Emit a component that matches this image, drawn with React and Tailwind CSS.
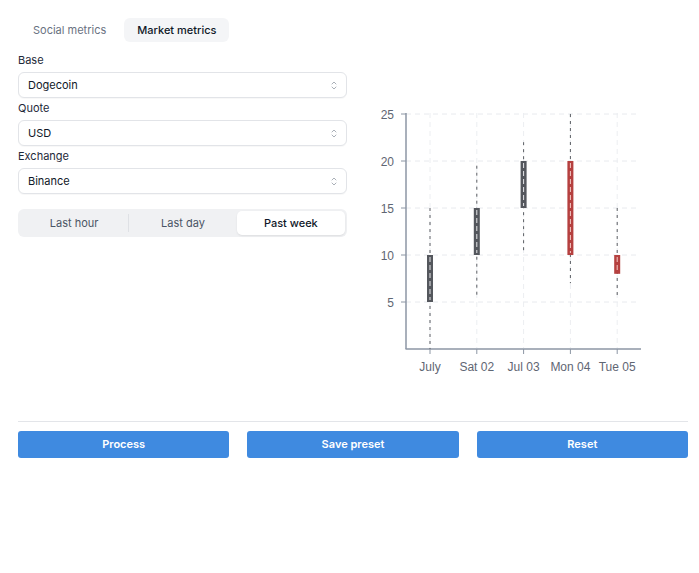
import { useState } from 'react'

const ui = { fontFamily: 'Inter, "Noto Sans", sans-serif' }

const Chevrons = () => (
    <svg width="8" height="11" viewBox="0 0 8 11" fill="none" stroke="#aab0b8" strokeWidth="1" strokeLinecap="round" strokeLinejoin="round">
        <path d="M2 4 L4 2 L6 4" />
        <path d="M2 7 L4 9 L6 7" />
    </svg>
)

const Select = ({ label, value, first }) => (
    <div className={first ? '' : 'mt-[3px]'}>
        <p className="text-[11px] leading-[14px] text-gray-800 mb-[5px]">{label}</p>
        <div className="h-[26px] border border-[#e2e4e8] rounded-md flex items-center justify-between pl-[9px] pr-[8px] bg-white shadow-[0_1px_1px_rgba(0,0,0,0.03)]">
            <span className="text-[11px] text-gray-900">{value}</span>
            <Chevrons />
        </div>
    </div>
)

// candle data: [x label, low, open, close, high, up]
const candles = [
    ['July', 0, 5, 10, 15, true],
    ['Sat 02', 5.5, 10, 15, 19.5, true],
    ['Jul 03', 10.5, 15, 20, 22, true],
    ['Mon 04', 7, 20, 10, 25, false],
    ['Tue 05', 5.5, 10, 8, 15, false],
]

const Y0 = 349
const K = 9.4
const yOf = v => Y0 - v * K
const X0 = 430
const DX = 46.8

const Chart = () => (
    <svg width="341" height="340" viewBox="347 53 341 340" style={{ fontFamily: '"Liberation Sans", Arial, sans-serif' }}>
        {[5, 10, 15, 20, 25].map(v => (
            <g key={v}>
                <line x1="406" x2="640" y1={yOf(v)} y2={yOf(v)} stroke="#e8eaee" strokeDasharray="5 4" />
                <line x1="401" x2="406" y1={yOf(v)} y2={yOf(v)} stroke="#8c96a4" />
                <text x="394" y={yOf(v) + 4.5} textAnchor="end" fontSize="12" fill="#5f6673">{v}</text>
            </g>
        ))}
        {candles.map(([label], i) => (
            <g key={label}>
                <line x1={X0 + i * DX} x2={X0 + i * DX} y1="113" y2="348" stroke="#eceef1" strokeDasharray="5 4" />
                <line x1={X0 + i * DX} x2={X0 + i * DX} y1="349" y2="354" stroke="#8c96a4" />
                <text x={X0 + i * DX} y="371" textAnchor="middle" fontSize="12" fill="#5f6673">{label}</text>
            </g>
        ))}
        <line x1="406" x2="406" y1="113" y2="349" stroke="#8c96a4" strokeWidth="1.5" />
        <line x1="405.5" x2="641" y1="349" y2="349" stroke="#8c96a4" strokeWidth="1.5" />
        {candles.map(([label, lo, o, c, hi, up], i) => {
            const x = X0 + i * DX
            const top = yOf(Math.max(o, c))
            const bot = yOf(Math.min(o, c))
            const col = up ? '#54575d' : '#b5403f'
            return (
                <g key={label + 'c'}>
                    <line x1={x} x2={x} y1={yOf(hi)} y2={yOf(lo)} stroke="#5a5d63" strokeWidth="1" strokeDasharray="3 4" />
                    <rect x={x - 3} y={top} width="6" height={bot - top} fill={col} />
                    <line x1={x} x2={x} y1={top + 2} y2={bot - 2} stroke={up ? '#e6e7ea' : '#f3c9c5'} strokeWidth="1" strokeDasharray="5 3" />
                </g>
            )
        })}
    </svg>
)

export default function App() {
    const [tab, setTab] = useState('market')
    const [range, setRange] = useState('week')

    return (
        <div className="min-h-[573px] bg-white pl-[18px] pr-[11px] pt-[18px]" style={ui}>
            <div className="flex items-center">
                <button onClick={() => setTab('social')}
                    className={`h-[24px] px-[15px] rounded-md text-[11px] ${tab === 'social' ? 'bg-[#f4f5f7] text-gray-900 font-medium' : 'text-gray-500'}`}>
                    Social metrics
                </button>
                <button onClick={() => setTab('market')}
                    className={`ml-[3px] h-[24px] px-[13px] rounded-md text-[11px] ${tab === 'market' ? 'bg-[#f4f5f7] text-gray-900 font-medium' : 'text-gray-500'}`}>
                    Market metrics
                </button>
            </div>

            <div className="flex mt-[11px]">
                <div className="w-[329px] shrink-0">
                    <Select label="Base" value="Dogecoin" first />
                    <Select label="Quote" value="USD" />
                    <Select label="Exchange" value="Binance" />

                    <div className="mt-[15px] h-[28px] bg-[#f0f1f3] rounded-md p-[2px] flex items-stretch">
                        {[['hour', 'Last hour'], ['day', 'Last day'], ['week', 'Past week']].map(([k, t], i) => (
                            <div key={k} className="flex-1 flex items-center">
                                {i === 1 && <div className={`w-px h-[18px] ${range === 'week' ? 'bg-[#dfe1e5]' : 'bg-transparent'}`} />}
                                <button onClick={() => setRange(k)}
                                    className={`flex-1 h-full rounded-[5px] text-[11px] ${range === k ? 'bg-white text-gray-900 font-medium shadow-[0_1px_2px_rgba(0,0,0,0.08)]' : 'text-gray-600'}`}>
                                    {t}
                                </button>
                            </div>
                        ))}
                    </div>
                </div>
                <div className="flex-1">
                    <Chart />
                </div>
            </div>

            <div className="mt-[28px] border-t border-[#e3e5e9]" />
            <div className="grid grid-cols-3 gap-[18px] mt-[9px]">
                {['Process', 'Save preset', 'Reset'].map(t => (
                    <button key={t} className="h-[27px] rounded-[3px] bg-[#3f8ae0] text-white text-[11px] font-semibold">{t}</button>
                ))}
            </div>
        </div>
    )
}
